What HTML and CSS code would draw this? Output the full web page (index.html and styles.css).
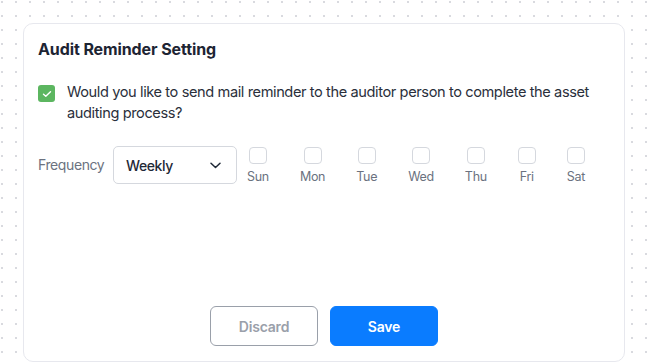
FILE: index.html
```html
<!DOCTYPE html>
<html>
<head>
<meta charset="utf-8">
<link rel="stylesheet" href="styles.css">
</head>
<body>
<div class="card">
  <h2 class="title">Audit Reminder Setting</h2>
  <label class="confirm">
    <span class="check-on">
      <svg width="10" height="8" viewBox="0 0 10 8"><path d="M1.5 4.2 L3.8 6.3 L8.5 1.7" fill="none" stroke="#fff" stroke-width="1.4" stroke-linecap="round" stroke-linejoin="round"/></svg>
    </span>
    <span class="confirm-text">Would you like to send mail reminder to the auditor person to complete the asset auditing process?</span>
  </label>
  <div class="freq-row">
    <span class="freq-label">Frequency</span>
    <div class="select">
      <span>Weekly</span>
      <svg width="11" height="7" viewBox="0 0 11 7"><path d="M1 1.2 L5.5 5.5 L10 1.2" fill="none" stroke="#1f2937" stroke-width="1.5" stroke-linecap="round" stroke-linejoin="round"/></svg>
    </div>
    <div class="days">
      <div class="day"><span class="box"></span><span class="day-name">Sun</span></div>
      <div class="day"><span class="box"></span><span class="day-name">Mon</span></div>
      <div class="day"><span class="box"></span><span class="day-name">Tue</span></div>
      <div class="day"><span class="box"></span><span class="day-name">Wed</span></div>
      <div class="day"><span class="box"></span><span class="day-name">Thu</span></div>
      <div class="day"><span class="box"></span><span class="day-name">Fri</span></div>
      <div class="day"><span class="box"></span><span class="day-name">Sat</span></div>
    </div>
  </div>
  <div class="actions">
    <button class="btn btn-discard">Discard</button>
    <button class="btn btn-save">Save</button>
  </div>
</div>
</body>
</html>
```

FILE: styles.css
```css
html, body {
  margin: 0;
  padding: 0;
}
body {
  width: 647px;
  height: 362px;
  overflow: hidden;
  font-family: Inter, "Noto Sans", sans-serif;
  background-color: #ffffff;
  background-image: radial-gradient(circle, #d9dadf 1px, transparent 1.4px);
  background-size: 14px 14px;
  background-position: -5px -5px;
}
.card {
  box-sizing: border-box;
  margin: 23px 0 0 23px;
  width: 602px;
  height: 339px;
  background: #ffffff;
  border: 1px solid #e7e8ee;
  border-radius: 10px;
  padding: 14px 14px 15px 14px;
  display: flex;
  flex-direction: column;
}
.title {
  margin: 0;
  font-size: 16px;
  line-height: 22px;
  font-weight: 700;
  color: #1d2433;
  letter-spacing: -0.1px;
}
.confirm {
  display: flex;
  align-items: flex-start;
  gap: 12px;
  margin-top: 24px;
}
.check-on {
  flex: none;
  width: 17px;
  height: 17px;
  margin-top: 1px;
  border-radius: 3px;
  background: #5cb660;
  display: flex;
  align-items: center;
  justify-content: center;
}
.confirm-text {
  font-size: 14.6px;
  line-height: 21px;
  color: #2a2f3b;
  margin-top: -2px;
  letter-spacing: -0.4px;
}
.freq-row {
  display: flex;
  align-items: flex-start;
  margin-top: 22px;
}
.freq-label {
  font-size: 14px;
  color: #6b7280;
  line-height: 38px;
  width: 75px;
  letter-spacing: -0.4px;
}
.select {
  box-sizing: border-box;
  width: 124px;
  height: 38px;
  border: 1px solid #d5d8de;
  border-radius: 5px;
  padding: 0 15px 0 12px;
  display: flex;
  align-items: center;
  justify-content: space-between;
  font-size: 14px;
  font-weight: 500;
  color: #1f2937;
  letter-spacing: -0.4px;
}
.days {
  display: flex;
  gap: 31px;
  margin-left: 10px;
  padding-top: 1px;
}
.day {
  display: flex;
  flex-direction: column;
  align-items: center;
  gap: 5px;
}
.box {
  box-sizing: border-box;
  width: 18px;
  height: 17px;
  border: 1px solid #d5d8de;
  border-radius: 4px;
}
.day-name {
  font-size: 12.5px;
  line-height: 16px;
  color: #6b7280;
  letter-spacing: -0.3px;
}
.actions {
  margin-top: auto;
  display: flex;
  justify-content: center;
  gap: 12px;
}
.btn {
  box-sizing: border-box;
  width: 108px;
  height: 40px;
  border-radius: 6px;
  font-family: Inter, "Noto Sans", sans-serif;
  font-size: 14px;
  font-weight: 600;
  cursor: pointer;
  letter-spacing: -0.2px;
}
.btn-discard {
  background: #ffffff;
  border: 1px solid #9aa0aa;
  color: #9aa0aa;
}
.btn-save {
  background: #0a7cff;
  border: 1px solid #0a7cff;
  color: #ffffff;
}
```
